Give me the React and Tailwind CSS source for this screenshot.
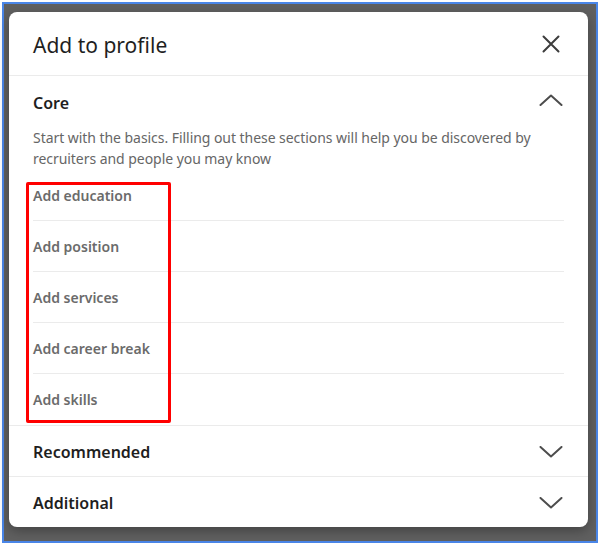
import React from "react";

function ChevronUp() {
  return (
    <svg width="24" height="12" viewBox="0 0 24 12" fill="none" className="block">
      <path d="M1.5 11 L12 1.5 L22.5 11" stroke="#4d4d4d" strokeWidth="2" strokeLinecap="round" strokeLinejoin="round" />
    </svg>
  );
}

function ChevronDown() {
  return (
    <svg width="24" height="12" viewBox="0 0 24 12" fill="none" className="block">
      <path d="M1.5 1 L12 10.5 L22.5 1" stroke="#4d4d4d" strokeWidth="2" strokeLinecap="round" strokeLinejoin="round" />
    </svg>
  );
}

function CloseIcon() {
  return (
    <svg width="18" height="18" viewBox="0 0 18 18" fill="none" className="block">
      <path d="M1.5 1.5 L16.5 16.5 M16.5 1.5 L1.5 16.5" stroke="#3d3d3d" strokeWidth="2" strokeLinecap="round" />
    </svg>
  );
}

const items = ["Add education", "Add position", "Add services", "Add career break", "Add skills"];

export default function App() {
  return (
    <div
      className="relative w-[600px] h-[544px] bg-white pt-[2px] pl-[2px]"
      style={{ fontFamily: '"Noto Sans", "Open Sans", sans-serif' }}
    >
      <div className="w-[596px] h-[541px] border-2 border-[#4a86e8] bg-[#606060] pt-[8px] pl-[5px]">
        <div className="w-[579px] h-[515px] bg-white rounded-lg shadow-[0_4px_12px_rgba(0,0,0,0.3)] overflow-hidden flex flex-col">
          <div className="h-[64px] flex items-center justify-between pl-6 pr-[24px] border-b border-[#ebebeb] shrink-0">
            <h2 className="text-[21px] leading-[28px] text-[#1f1f1f] font-normal mt-[2px]">Add to profile</h2>
            <div className="w-[24px] flex justify-center mr-[1px] mt-[1px]">
              <CloseIcon />
            </div>
          </div>

          <div className="px-6 border-b border-[#ebebeb]">
            <div className="pt-[15px] h-[39px] flex items-center justify-between">
              <span className="text-[16px] leading-6 font-semibold text-[#1f1f1f]">Core</span>
              <div className="mr-[1px] -mt-[7px]">
                <ChevronUp />
              </div>
            </div>
            <p className="mt-[12px] text-[14px] leading-[21px] tracking-[-0.05px] text-[#666666]">
              Start with the basics. Filling out these sections will help you be discovered by recruiters and people you may know
            </p>
            <ul className="mt-px">
              {items.map((it, i) => (
                <li
                  key={it}
                  className={
                    "h-[51px] flex items-center text-[14px] font-semibold text-[#6b6b6b] " +
                    (i < items.length - 1 ? "border-b border-[#ebebeb]" : "")
                  }
                >
                  {it}
                </li>
              ))}
            </ul>
          </div>

          <div className="h-[51px] px-6 flex items-center justify-between border-b border-[#ebebeb]">
            <span className="text-[16px] font-semibold text-[#1f1f1f] mt-[2px]">Recommended</span>
            <div className="mr-[1px] mt-[2px]">
              <ChevronDown />
            </div>
          </div>
          <div className="h-[51px] px-6 flex items-center justify-between">
            <span className="text-[16px] font-semibold text-[#1f1f1f] mt-[2px]">Additional</span>
            <div className="mr-[1px] mt-[2px]">
              <ChevronDown />
            </div>
          </div>
        </div>
      </div>

      <div className="absolute left-[26px] top-[182px] w-[145px] h-[241px] border-[3px] border-[#ff0000] rounded-[2px] pointer-events-none" />
    </div>
  );
}
